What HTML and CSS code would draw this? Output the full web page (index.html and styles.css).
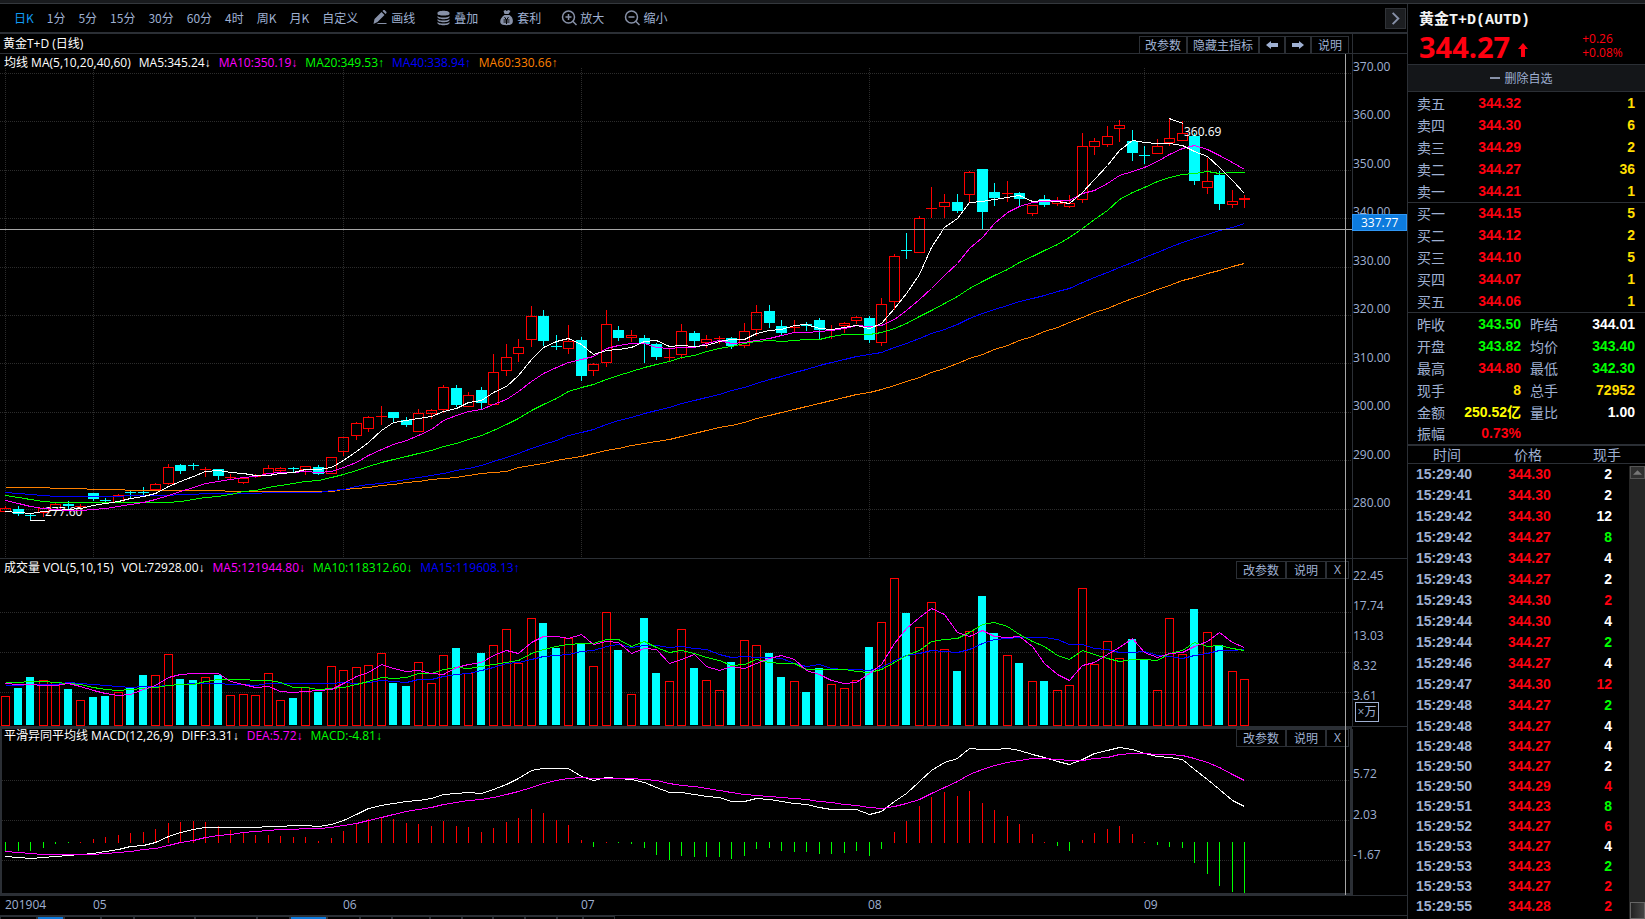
FILE: index.html
```html
<!DOCTYPE html>
<html lang="zh-CN">
<head>
<meta charset="utf-8">
<title>黄金T+D(AUTD)</title>
<link rel="stylesheet" href="styles.css">
</head>
<body>
<div class="app">
  <div class="top-strip"></div>
  <main class="workspace">
    <section class="charts">
      <nav class="toolbar">
        <div class="periods">
          <button class="tool active">日K</button>
          <button class="tool">1分</button>
          <button class="tool">5分</button>
          <button class="tool">15分</button>
          <button class="tool">30分</button>
          <button class="tool">60分</button>
          <button class="tool">4时</button>
          <button class="tool">周K</button>
          <button class="tool">月K</button>
          <button class="tool">自定义</button>
        </div>
        <div class="actions">
          <button class="tool"><svg class="icon" viewBox="0 0 16 16"><path class="fill" d="M1 14l1-5 7-7 3 3-7 7zM10 1l1-1h1l2 2v1l-1 1z"/><path class="fill" d="M6 13h8v1H4z"/></svg>画线</button>
          <button class="tool"><svg class="icon" viewBox="0 0 16 16"><path class="fill" d="M2 3c0-3 12-3 12 0v1c0 2-12 2-12 0zM2 6c2 2 10 2 12 0v1c0 3-12 3-12 0zM2 9c2 2 10 2 12 0v1c0 3-12 3-12 0zM2 12c2 2 10 2 12 0v1c0 3-12 3-12 0z"/></svg>叠加</button>
          <button class="tool"><svg class="icon" viewBox="0 0 16 16"><path class="fill" d="M5 1l2-1 1 1 2-1 2 1-2 3H6zM6 5h5c3 2 4 5 3 8-1 3-11 3-12 0-1-3 1-6 4-8z"/><path class="cut" d="M6 7l2 3 2-3M5 10h6M5 12h6M8 10v4"/></svg>套利</button>
          <button class="tool"><svg class="icon" viewBox="0 0 16 16"><circle class="line" cx="7" cy="7" r="6"/><path class="line" d="M11 11l4 4M4 7h6M7 4v6"/></svg>放大</button>
          <button class="tool"><svg class="icon" viewBox="0 0 16 16"><circle class="line" cx="7" cy="7" r="6"/><path class="line" d="M11 11l4 4M4 7h6"/></svg>缩小</button>
        </div>
        <button class="more" aria-label="更多"><svg viewBox="0 0 20 20"><path d="M7 4l6 6-6 6"/></svg></button>
      </nav>

      <div class="chart-area">
        <header class="chart-title">
          <h1>黄金T+D (日线)</h1>
          <div class="pane-buttons compact">
            <button>改参数</button><button>隐藏主指标</button><button class="arrow-btn" aria-label="上一个"><svg viewBox="0 0 12 8"><path d="M0 4l5-4v2h7v4H5v2z"/></svg></button><button class="arrow-btn" aria-label="下一个"><svg viewBox="0 0 12 8"><path d="M12 4L7 0v2H0v4h7v2z"/></svg></button><button class="wide">说明</button>
          </div>
          <div class="axis-cap"></div>
        </header>

        <section class="pane pane-main">
          <div class="plot">
            <svg id="price" viewBox="0 54 1352 504" preserveAspectRatio="none"></svg>
            <p class="legend"><span>均线 MA(5,10,20,40,60)</span><span>MA5:345.24↓</span><span class="magenta">MA10:350.19↓</span><span class="green">MA20:349.53↑</span><span class="blue">MA40:338.94↑</span><span class="orange">MA60:330.66↑</span></p>
          </div>
          <div class="axis">
            <span>370.00</span><span>360.00</span><span>350.00</span><span>340.00</span><span>330.00</span><span>320.00</span><span>310.00</span><span>300.00</span><span>290.00</span><span>280.00</span>
            <b class="price-tag">337.77</b>
          </div>
        </section>

        <section class="pane pane-volume">
          <div class="plot">
            <svg id="volume" viewBox="0 559 1352 167" preserveAspectRatio="none"></svg>
            <p class="legend"><span>成交量 VOL(5,10,15)</span><span>VOL:72928.00↓</span><span class="magenta">MA5:121944.80↓</span><span class="green">MA10:118312.60↓</span><span class="blue">MA15:119608.13↑</span></p>
            <div class="pane-buttons floating"><button>改参数</button><button class="wide">说明</button><button class="close">X</button></div>
          </div>
          <div class="axis">
            <span>22.45</span><span>17.74</span><span>13.03</span><span>8.32</span><span>3.61</span>
            <b class="unit">×万</b>
          </div>
        </section>

        <section class="pane pane-macd">
          <div class="plot">
            <svg id="macd" viewBox="2 729 1348 164" preserveAspectRatio="none"></svg>
            <p class="legend"><span>平滑异同平均线 MACD(12,26,9)</span><span>DIFF:3.31↓</span><span class="magenta">DEA:5.72↓</span><span class="green">MACD:-4.81↓</span></p>
            <div class="pane-buttons floating"><button>改参数</button><button class="wide">说明</button><button class="close">X</button></div>
          </div>
          <div class="axis">
            <span>5.72</span><span>2.03</span><span>-1.67</span>
          </div>
        </section>
        <div class="cursor-line"></div>
      </div>

      <footer class="dates"><span>201904</span><span>05</span><span>06</span><span>07</span><span>08</span><span>09</span></footer>
      <div class="tabs" id="tabs"></div>
    </section>

    <aside class="quote">
      <header class="quote-head">
        <h2>黄金T+D(AUTD)</h2>
        <div class="last">
          <strong>344.27</strong>
          <svg class="up" viewBox="0 0 10 14"><path d="M5 0l5 6H7v8H3V6H0z"/></svg>
          <div class="change"><span>+0.26</span><span>+0.08%</span></div>
        </div>
      </header>
      <button class="remove"><i></i>删除自选</button>

      <table class="book">
        <colgroup><col class="c-label"><col class="c-value"><col></colgroup>
        <tbody>
          <tr><th>卖五</th><td class="red">344.32</td><td class="gold">1</td></tr>
          <tr><th>卖四</th><td class="red">344.30</td><td class="gold">6</td></tr>
          <tr><th>卖三</th><td class="red">344.29</td><td class="gold">2</td></tr>
          <tr><th>卖二</th><td class="red">344.27</td><td class="gold">36</td></tr>
          <tr><th>卖一</th><td class="red">344.21</td><td class="gold">1</td></tr>
        </tbody>
        <tbody>
          <tr><th>买一</th><td class="red">344.15</td><td class="gold">5</td></tr>
          <tr><th>买二</th><td class="red">344.12</td><td class="gold">2</td></tr>
          <tr><th>买三</th><td class="red">344.10</td><td class="gold">5</td></tr>
          <tr><th>买四</th><td class="red">344.07</td><td class="gold">1</td></tr>
          <tr><th>买五</th><td class="red">344.06</td><td class="gold">1</td></tr>
        </tbody>
      </table>

      <table class="book stats">
        <colgroup><col class="c-label"><col class="c-value"><col class="c-label"><col></colgroup>
        <tbody>
          <tr><th>昨收</th><td class="green">343.50</td><th>昨结</th><td class="white">344.01</td></tr>
          <tr><th>开盘</th><td class="green">343.82</td><th>均价</th><td class="green">343.40</td></tr>
          <tr><th>最高</th><td class="red">344.80</td><th>最低</th><td class="green">342.30</td></tr>
          <tr><th>现手</th><td class="gold">8</td><th>总手</th><td class="gold">72952</td></tr>
          <tr><th>金额</th><td class="yellow">250.52亿</td><th>量比</th><td class="white">1.00</td></tr>
          <tr><th>振幅</th><td class="red">0.73%</td><th></th><td></td></tr>
        </tbody>
      </table>

      <div class="trades">
        <table>
          <colgroup><col class="c-time"><col class="c-price"><col></colgroup>
          <thead><tr><th>时间</th><th>价格</th><th>现手</th></tr></thead>
          <tbody>
            <tr><td>15:29:40</td><td>344.30</td><td class="white">2</td></tr>
            <tr><td>15:29:41</td><td>344.30</td><td class="white">2</td></tr>
            <tr><td>15:29:42</td><td>344.30</td><td class="white">12</td></tr>
            <tr><td>15:29:42</td><td>344.27</td><td class="green">8</td></tr>
            <tr><td>15:29:43</td><td>344.27</td><td class="white">4</td></tr>
            <tr><td>15:29:43</td><td>344.27</td><td class="white">2</td></tr>
            <tr><td>15:29:43</td><td>344.30</td><td class="red">2</td></tr>
            <tr><td>15:29:44</td><td>344.30</td><td class="white">4</td></tr>
            <tr><td>15:29:44</td><td>344.27</td><td class="green">2</td></tr>
            <tr><td>15:29:46</td><td>344.27</td><td class="white">4</td></tr>
            <tr><td>15:29:47</td><td>344.30</td><td class="red">12</td></tr>
            <tr><td>15:29:48</td><td>344.27</td><td class="green">2</td></tr>
          </tbody>
          <tbody class="recent">
            <tr><td>15:29:48</td><td>344.27</td><td class="white">4</td></tr>
            <tr><td>15:29:48</td><td>344.27</td><td class="white">4</td></tr>
            <tr><td>15:29:50</td><td>344.27</td><td class="white">2</td></tr>
            <tr><td>15:29:50</td><td>344.29</td><td class="red">4</td></tr>
            <tr><td>15:29:51</td><td>344.23</td><td class="green">8</td></tr>
            <tr><td>15:29:52</td><td>344.27</td><td class="red">6</td></tr>
            <tr><td>15:29:53</td><td>344.27</td><td class="white">4</td></tr>
            <tr><td>15:29:53</td><td>344.23</td><td class="green">2</td></tr>
            <tr><td>15:29:53</td><td>344.27</td><td class="red">2</td></tr>
            <tr><td>15:29:55</td><td>344.28</td><td class="red">2</td></tr>
          </tbody>
        </table>
        <div class="scrollbar"><button class="scroll-up" aria-label="向上滚动"><svg viewBox="0 0 10 5"><path d="M5 0l5 5H0z"/></svg></button><div class="thumb"></div></div>
      </div>
    </aside>
  </main>
</div>
<script src="chart.js"></script>
</body>
</html>
```
FILE: styles.css
```css
* { box-sizing: border-box; }

:root {
  --line: #2b2f35;
  --text: #9fb0d2;
  --red: #ff0010;
  --green: #00ff00;
  --ui: "Open Sans", "Liberation Sans", "Noto Sans CJK SC", sans-serif;
  --cjk: "Noto Sans CJK SC", sans-serif;
}

body {
  margin: 0;
  background: #000;
  color: var(--text);
  font: 12px/16px var(--ui);
  overflow: hidden;
}

button {
  margin: 0;
  padding: 0;
  border: 0;
  background: none;
  color: inherit;
  font: 12px/16px var(--cjk);
}

h1, h2, p { margin: 0; font-weight: normal; }

.app { display: flex; flex-direction: column; min-height: 100vh; }
.top-strip { height: 4px; background: #191b1e; border-bottom: 1px solid #34383d; }
.workspace { flex: 1; display: flex; }
.charts { flex: 1; min-width: 0; display: flex; flex-direction: column; }

/* toolbar */
.toolbar { display: flex; align-items: center; height: 30px; border-bottom: 2px solid var(--line); padding-left: 14px; }
.periods { display: flex; gap: 13px; }
.actions { display: flex; gap: 20px; margin-left: 14px; }
.tool { display: flex; align-items: center; gap: 3px; white-space: nowrap; }
.actions .tool { gap: 2px; }
.tool.active { color: #109cf5; }
.icon { width: 17px; height: 16px; }
.icon .fill { fill: #8791a8; }
.icon .line { fill: none; stroke: #8791a8; stroke-width: 1.5; }
.icon .cut { fill: none; stroke: #000; stroke-width: 1; }
.more { margin-left: auto; width: 21px; height: 21px; background: #1c1e21; border: 1px solid #303338; margin-right: 1px; }
.more svg { display: block; width: 19px; height: 19px; }
.more path { fill: none; stroke: #8791a8; stroke-width: 2; }

/* chart area */
.chart-area { flex: 1; position: relative; display: grid; grid-template-rows: auto 505fr 170fr 167fr; }
.chart-title { display: flex; height: 20px; border-bottom: 1px solid var(--line); color: #fff; }
.chart-title h1 { flex: 1; padding-left: 3px; font: 12px/20px var(--ui); }
.chart-title .pane-buttons { margin: 2px 3px 0 0; }
.axis-cap { width: 55px; border-left: 1px solid var(--line); }

.pane-buttons { display: flex; }
.pane-buttons button { height: 18px; padding: 0 6px; border: 1px solid var(--line); background: #000; color: var(--text); line-height: 16px; }
.pane-buttons button + button { border-left-width: 2px; margin-left: -1px; }
.pane-buttons .wide { padding: 0 7px; }
.pane-buttons.compact button { padding: 0 5px; }
.pane-buttons.compact .wide { padding: 0 6px; }
.pane-buttons .arrow-btn { width: 27px; }
.pane-buttons .close { width: 24px; font-family: var(--ui); }
.arrow-btn svg { display: block; width: 12px; height: 8px; margin: 0 auto; fill: var(--text); }
.floating { position: absolute; top: 2px; right: 3px; }
.pane-macd .floating { top: 0; right: 1px; }

.pane { display: grid; grid-template-columns: 1fr 55px; min-height: 0; }
.plot { position: relative; min-height: 0; }
.pane-main .plot, .pane-main .axis { border-bottom: 1px solid var(--line); }
.pane-volume .plot { border-bottom: 3px solid var(--line); }
.pane-macd .plot { border: solid var(--line); border-width: 0 2px 3px; }
.plot svg { position: absolute; width: 100%; height: 100%; display: block; shape-rendering: crispEdges; font: 12px var(--ui); }

.legend { position: absolute; left: 4px; top: 1px; display: flex; gap: 8px; color: #fff; white-space: nowrap; }
.pane-macd .legend { left: 2px; top: -1px; }

.axis { position: relative; display: flex; flex-direction: column; justify-content: space-between; border-left: 1px solid var(--line); }
.pane-main .axis { padding: 5px 0 47px; }
.pane-volume .axis { padding: 9px 0 22px; margin-bottom: 2px; border-bottom: 1px solid var(--line); }
.pane-macd .axis { padding: 37px 0 32px; border-bottom: 1px solid var(--line); }
.price-tag { position: absolute; top: 160px; left: -1px; right: 0; height: 17px; padding-left: 8px; border: 1px solid #2f96f4; background: #0d7bdd; color: #fff; font-weight: normal; line-height: 16px; }
.unit { position: absolute; left: 2px; bottom: 4px; width: 24px; height: 20px; border: 1px solid var(--text); font: 12px/18px var(--ui); text-align: center; white-space: nowrap; }
.cursor-line { position: absolute; top: 20px; bottom: 1px; right: 61px; width: 1px; background: #a6a6a6; }

.dates { display: grid; grid-template-columns: 88fr 250fr 238fr 287fr 276fr 263fr; height: 20px; padding-left: 5px; border-bottom: 1px solid var(--line); line-height: 17px; }
.tabs { display: flex; height: 3px; }
.tabs i { border: solid var(--line); border-width: 1px 1px 0; }
.tabs .on { background: #0d7bdd; }

/* quote panel */
.quote { width: 238px; display: flex; flex-direction: column; border-left: 1px solid var(--line); }
.quote-head { height: 61px; padding: 8px 0 0 11px; border-bottom: 1px solid var(--line); }
.quote-head h2 { color: #f4f4f4; font: bold 15px/18px "Liberation Mono", "Noto Sans CJK SC", monospace; }
.last { display: flex; align-items: center; height: 34px; color: var(--red); }
.last strong { font: bold 29px/34px "Open Sans", sans-serif; }
.up { width: 10px; height: 14px; margin: 6px 54px 0 8px; fill: var(--red); }
.change { display: flex; flex-direction: column; line-height: 14px; padding-bottom: 2px; }
.remove { display: flex; align-items: center; justify-content: center; gap: 4px; height: 27px; padding-right: 10px; background: #141619; border-bottom: 1px solid var(--line); }
.remove i { width: 10px; height: 2px; background: #8791a8; }

table { width: 100%; border-collapse: collapse; table-layout: fixed; font: bold 14px/20px "Liberation Sans", "Noto Sans CJK SC", sans-serif; }
th, td { padding: 0; }
th { font: 14px/20px var(--cjk); text-align: left; }
.c-label { width: 53px; }
.c-value { width: 60px; }
.book tr { height: 22px; }
.book th { padding-left: 9px; }
.book td { text-align: right; }
.book td:last-child { padding-right: 10px; }
.book tbody { border-bottom: 1px solid var(--line); }
.book td { white-space: nowrap; }
.stats tbody { border-bottom: 2px solid var(--line); }

.trades { flex: 1; position: relative; }
.c-time { width: 100px; }
.c-price { width: 60px; }
.trades thead { border-bottom: 1px solid var(--line); }
.trades thead tr { height: 18px; }
.trades th { line-height: 16px; padding-left: 25px; }
.trades th:nth-child(2) { padding-left: 6px; }
.trades th:last-child { padding: 0 24px 0 0; text-align: right; }
.trades tbody tr { height: 21px; }
.trades .recent tr { height: 20px; }
.trades td:first-child { padding-left: 8px; }
.trades td:nth-child(2) { color: var(--red); }
.trades td:last-child { padding-right: 33px; text-align: right; }
.scrollbar { position: absolute; top: 20px; right: 0; bottom: 0; width: 16px; display: flex; flex-direction: column; justify-content: space-between; background: #262626; }
.scroll-up { width: 15px; height: 13px; margin-left: 1px; border: 1px solid #555; background: #303030; }
.scroll-up svg { display: block; width: 9px; height: 5px; margin: auto; fill: #777; }
.thumb { height: 17px; margin-left: 1px; border: 1px solid #666; background: linear-gradient(90deg, #222, #444); }

.red { color: var(--red); }
.green { color: var(--green); }
.white { color: #fff; }
.gold { color: #ffde00; }
.yellow { color: #ffff00; }
.magenta { color: #ff00ff; }
.blue { color: #0000ff; }
.orange { color: #ff8000; }
```
FILE: chart.js
```js
// Each candle: [direction, body top, body bottom, high, low] in plot rows.
const candles = `R508,511,506,511 C509,514,506,515 C515,515,513,520 R508,512,507,516 R504,509,503,509
C504,506,501,510 R506,506,504,508 C493,499,493,500 C500,500,498,502 R495,502,494,502
C492,492,491,498 C492,492,487,495 R484,489,483,490 R467,483,464,484 C465,471,464,473
C465,465,463,469 R469,469,467,476 C469,476,469,479 R477,477,474,479 R478,482,478,483
R476,476,474,477 R468,473,465,473 R468,470,467,472 C468,468,467,471 R466,469,466,474
C467,474,465,474 R457,473,457,473 R437,451,437,455 R423,435,422,439 R417,428,416,431
R416,416,406,424 C412,418,412,421 C420,425,417,426 R413,431,409,431 R410,413,409,418
R387,409,385,412 C388,405,385,406 R395,406,392,406 C390,403,387,408 R372,404,354,404
R357,370,344,375 R347,353,339,361 R316,339,306,346 C316,341,310,345 C346,346,335,349
R341,348,325,353 C340,376,337,380 R364,370,363,375 R324,362,310,366 C330,338,326,340
R335,337,330,341 C338,344,335,362 C344,357,343,359 R357,357,348,360 R331,354,324,358
C333,341,331,347 R339,342,335,347 R338,338,336,343 C338,346,337,348 R331,345,323,347
R312,329,305,335 C311,323,305,327 C326,333,320,335 R327,327,320,331 C324,326,322,330
C320,330,318,339 R329,329,325,338 R323,325,322,332 R317,320,316,323 C318,340,316,342
R304,342,298,345 R256,301,254,309 C250,250,233,258 R218,252,216,252 R208,208,187,217
R202,206,194,217 C202,211,194,212 R172,194,171,202 C169,212,169,229 C192,198,183,205
R193,193,181,201 C193,199,192,205 R205,213,205,215 C199,205,195,206 R201,203,197,205
R203,206,195,207 R146,199,133,202 R141,146,138,154 R136,144,126,146 R125,128,120,141
C141,153,130,160 C155,155,146,163 R146,153,139,153 R138,142,119,145 R133,140,121,140
C136,181,133,184 R181,187,158,193 C175,204,171,209 R201,204,190,207 R198,199,195,207`
  .split(/\s+/).map(s => [s[0], ...s.slice(1).split(',').map(Number)]);

const volumes = [696,688,677,680,682,689,700,697,696,692,687,675,675,654,679,680,677,675,695,694,
  695,673,700,698,687,692,666,670,667,665,653,683,686,662,683,655,648,673,653,645,
  629,663,618,623,648,638,643,666,612,650,694,618,673,681,629,668,680,690,662,640,
  645,653,677,681,692,668,684,688,680,647,622,578,613,627,602,649,671,631,596,633,
  655,663,681,681,690,685,588,664,641,658,639,659,690,618,654,609,632,645,671,679];

const histogram = [851,851,851,848,844,843,842,839,837,835,833,832,829,823,822,821,822,826,830,833,
  835,835,836,837,837,841,838,831,823,819,817,819,823,824,826,821,826,827,832,828,
  822,818,809,813,820,825,840,847,842,843,844,848,855,860,856,857,857,857,859,856,
  849,848,851,852,852,854,854,853,851,856,849,832,821,806,797,792,796,791,803,810,
  816,824,834,842,846,851,840,833,829,826,834,842,845,847,848,863,874,886,892,893];

const diff = [856,857,858,857,856,855,854,853,851,849,846,845,842,836,832,829,827,827,827,827,
  827,826,826,825,825,826,824,820,814,808,805,803,801,800,798,794,793,792,793,789,
  784,778,770,768,768,768,776,780,777,778,779,782,787,792,792,794,796,797,801,801,
  798,799,801,803,804,807,809,809,809,814,811,801,793,781,770,762,758,748,749,749,
  748,750,754,757,761,764,759,753,750,747,749,753,756,757,759,769,779,789,800,806];

const dea = [851,852,853,854,854,854,854,854,853,852,851,849,848,845,842,840,837,835,834,832,
  831,830,829,829,828,828,827,825,823,820,817,814,811,809,807,804,802,800,799,797,
  794,791,787,783,780,778,777,778,778,778,778,779,780,783,785,786,788,790,792,794,
  795,796,797,798,799,801,802,804,805,807,808,806,803,799,793,787,781,774,769,765,
  762,760,758,758,759,760,760,758,757,754,753,753,754,754,755,758,762,767,774,780];

const RED = '#ff0000', CYAN = '#00ffff', LIME = '#00ff00', MAGENTA = '#ff00ff',
  BLUE = '#0000ff', ORANGE = '#ff8000', WHITE = '#ffffff', GRID = '#2c2c2c';
const xAt = i => Math.round(5 + 12.52 * i);
const monthStarts = [0, 7, 27, 46, 69, 91];

const line = (x1, y1, x2, y2, color, extra = '') =>
  `<line x1="${x1}" y1="${y1}" x2="${x2}" y2="${y2}" stroke="${color}" ${extra}/>`;
const box = (x, y, w, h, color) =>
  `<rect x="${x}" y="${y}" width="${w}" height="${h}" fill="${color}"/>`;
const frame = (x, y, w, h, color) =>
  `<rect x="${x + 0.5}" y="${y + 0.5}" width="${w - 1}" height="${h - 1}" fill="none" stroke="${color}"/>`;
const curve = (ys, color) =>
  `<polyline fill="none" stroke="${color}" points="${ys.map((y, i) => `${xAt(i) + 0.5},${Math.round(y) + 0.5}`).join(' ')}"/>`;

const gridRows = (rows, width) =>
  rows.map(y => line(0, y + 0.5, width, y + 0.5, GRID, 'stroke-dasharray="1 1"')).join('');

// Moving average; the first values come from history before the visible range.
function average(series, n, history) {
  return series.map((_, i) => i < n - 1
    ? history[i]
    : series.slice(i - n + 1, i + 1).reduce((a, b) => a + b, 0) / n);
}

function drawPrice() {
  const closes = candles.map(c => c[0] === 'R' ? c[1] : c[2]);
  let out = gridRows([73, 121, 170, 218, 267, 315, 363, 412, 460, 509], 1352);
  monthStarts.forEach(i => {
    out += line(xAt(i) + 0.5, 68, xAt(i) + 0.5, 558, GRID, 'stroke-dasharray="1 1"');
  });
  candles.forEach(([kind, top, bottom, high, low], i) => {
    const x = xAt(i);
    const color = kind === 'R' ? RED : CYAN;
    if (kind === 'C' || bottom - top < 2) {
      out += box(x, high, 1, low - high + 1, color);
      out += box(x - 5, top, 11, Math.max(1, bottom - top + (kind === 'R' ? 1 : 0)), color);
    } else {
      out += box(x, high, 1, top - high, color) + box(x, bottom, 1, low - bottom + 1, color);
      out += frame(x - 5, top, 11, bottom - top + 1, color);
    }
  });
  out += `<text x="45" y="516" fill="#fff">277.60</text>`;
  out += curve(average(closes, 60, [487,487,487,487,488,488,488,489,489,489,490,490,490,490,490,490,490,490,491,491,
    491,491,491,491,491,491,491,489,488,487,485,484,482,481,479,478,477,475,473,472,
    471,467,465,463,460,458,456,453,450,448,445,443,441,439,436,433,430,427,425]), ORANGE);
  out += curve(average(closes, 40, [492,493,494,495,496,496,496,496,496,496,495,495,495,495,494,494,493,493,493,493,
    493,492,492,492,492,492,490,489,486,484,483,481,479,477,475,473,470,468,465]), BLUE);
  out += curve(average(closes, 20, [495,497,499,501,502,502,502,502,502,502,502,502,502,502,501,499,497,496,494]), LIME);
  out += curve(average(closes, 10, [500,503,506,508,509,510,510,509,508]), MAGENTA);
  out += curve(average(closes, 5, [511,512,513,511]), WHITE);
  out += line(30, 520.5, 45, 520.5, WHITE) + line(1169, 118.5, 1183, 123.5, WHITE);
  out += `<text x="1184" y="136" fill="#fff">360.69</text>`;
  out += line(0, 229.5, 1352, 229.5, '#a6a6a6');
  document.getElementById('price').innerHTML = out;
}

function drawVolume() {
  let out = gridRows([612, 652, 692], 1352);
  volumes.forEach((y, i) => {
    const x = xAt(i);
    out += candles[i][0] === 'R' ? frame(x - 4, y, 9, 726 - y, RED) : box(x - 4, y, 8, 725 - y, CYAN);
  });
  out += curve(average(volumes, 15, [685,685,684,684,684,682,683,684,685,686,687,686,686,685]), BLUE);
  out += curve(average(volumes, 10, [682,682,681,681,682,683,684,687,689]), LIME);
  out += curve(average(volumes, 5, [683,684,684,685]), MAGENTA);
  document.getElementById('volume').innerHTML = out;
}

function drawMacd() {
  let out = gridRows([780, 820, 860], 1350);
  histogram.forEach((y, i) => {
    out += y <= 842 ? box(xAt(i), y, 1, 843 - y, RED) : box(xAt(i), 842, 1, y - 842, LIME);
  });
  out += curve(diff, WHITE) + curve(dea, MAGENTA);
  document.getElementById('macd').innerHTML = out;
}

function drawTabs() {
  const widths = [37, 27, 37, 33, 61, 62, 33, 37, 33, 32, 38, 32, 31, 32, 32, 26, 32];
  document.getElementById('tabs').innerHTML = widths
    .map((w, i) => `<i class="${i === 1 || i === 7 ? 'on' : ''}" style="width:${w}px"></i>`).join('');
}

drawPrice();
drawVolume();
drawMacd();
drawTabs();
```
